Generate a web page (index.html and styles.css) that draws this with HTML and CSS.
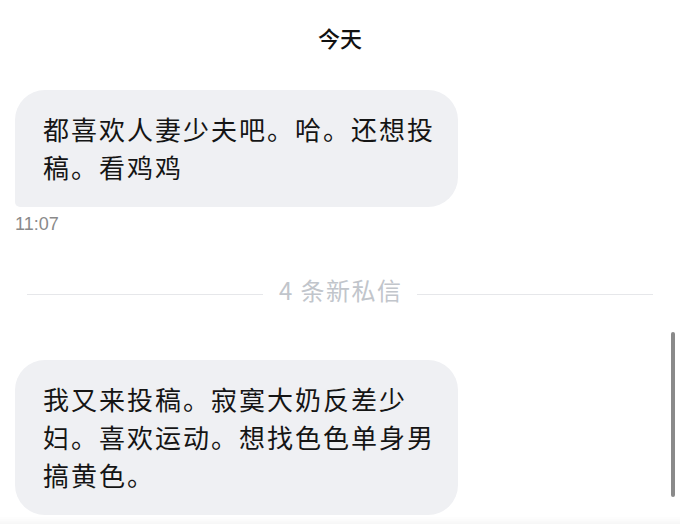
FILE: index.html
```html
<!DOCTYPE html>
<html lang="zh-CN">
<head>
    <meta charset="UTF-8">
    <meta name="viewport" content="width=device-width, initial-scale=1.0">
    <title>私信</title>
    <link rel="stylesheet" href="styles.css">
</head>
<body>
    <div class="chat">
        <div class="day">今天</div>

        <div class="bubble bubble-last">都喜欢人妻少夫吧。哈。还想投稿。看鸡鸡</div>
        <div class="time">11:07</div>

        <div class="divider">
            <span class="divider-line"></span>
            <span class="divider-text">4 条新私信</span>
            <span class="divider-line"></span>
        </div>

        <div class="bubble bubble-new">我又来投稿。寂寞大奶反差少妇。喜欢运动。想找色色单身男搞黄色。</div>
    </div>

    <div class="scrollbar"></div>
    <div class="bottom-fade"></div>
</body>
</html>
```

FILE: styles.css
```css
body {
    margin: 0;
    background-color: #fff;
    font-family: "Noto Sans CJK SC", "Noto Sans", sans-serif;
    color: #151515;
    overflow: hidden;
}

.chat {
    display: flex;
    flex-direction: column;
    align-items: flex-start;
    padding-top: 21px;
}

.day {
    align-self: stretch;
    text-align: center;
    font-size: 22px;
    line-height: 32px;
    font-weight: 500;
    color: #111;
}

.bubble {
    box-sizing: border-box;
    width: 443px;
    margin-left: 15px;
    padding: 20px 18px 21px 28px;
    background-color: #eff0f3;
    border-radius: 30px;
    font-size: 26px;
    line-height: 38px;
    letter-spacing: 2px;
}

.bubble-last {
    margin-top: 37px;
    border-bottom-left-radius: 5px;
}

.bubble-new {
    margin-top: 53px;
}

.time {
    margin: 7px 0 0 15px;
    font-family: "Liberation Sans", Arial, sans-serif;
    font-size: 18px;
    line-height: 21px;
    color: #8a8a8a;
}

.divider {
    align-self: stretch;
    display: flex;
    align-items: center;
    gap: 16px;
    margin: 38px 27px 0 27px;
}

.divider-line {
    flex: 1;
    height: 1px;
    margin-top: 8px;
    background-color: #e6e7ea;
}

.divider-text {
    font-size: 24px;
    line-height: 34px;
    letter-spacing: 1.5px;
    margin-right: -1.5px;
    color: #c1c5cb;
}

.scrollbar {
    position: fixed;
    top: 332px;
    right: 5px;
    width: 4px;
    height: 165px;
    border-radius: 2px;
    background-color: #8a8a8a;
}

.bottom-fade {
    position: fixed;
    left: 0;
    right: 0;
    bottom: 0;
    height: 8px;
    background: linear-gradient(to bottom, rgba(0, 0, 0, 0), rgba(0, 0, 0, 0.03));
}
```
